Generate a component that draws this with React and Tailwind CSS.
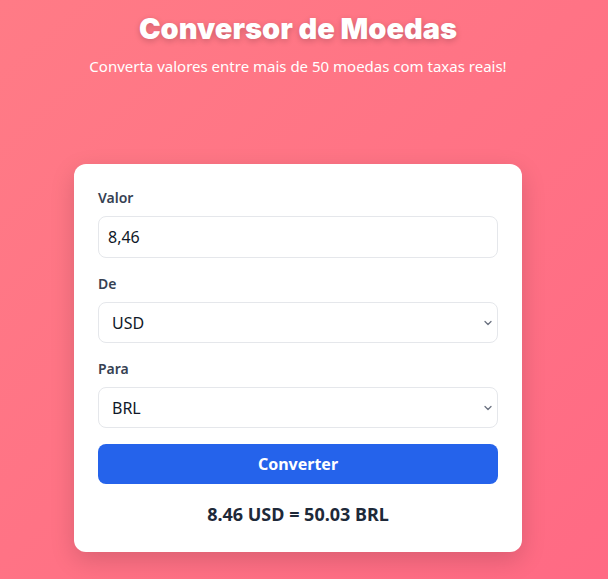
import React, { useState } from "react";

const rates = { USD: 1, BRL: 5.914, EUR: 0.92, GBP: 0.79, JPY: 149.5 };

function Chevron() {
  return (
    <svg className="pointer-events-none absolute right-[5px] top-1/2 -translate-y-1/2" width="10" height="10" viewBox="0 0 10 10" fill="none">
      <path d="M2 3.5 L5 6.5 L8 3.5" stroke="#6b7280" strokeWidth="1.3" strokeLinecap="round" strokeLinejoin="round" />
    </svg>
  );
}

function CurrencySelect({ value, onChange }) {
  return (
    <div className="relative">
      <select
        value={value}
        onChange={(e) => onChange(e.target.value)}
        className="w-full appearance-none rounded-lg border border-gray-200 bg-white px-[13px] h-[41px] text-base text-gray-900 outline-none"
      >
        {Object.keys(rates).map((c) => (
          <option key={c} value={c}>
            {c}
          </option>
        ))}
      </select>
      <Chevron />
    </div>
  );
}

export default function App() {
  const [amount, setAmount] = useState("8,46");
  const [from, setFrom] = useState("USD");
  const [to, setTo] = useState("BRL");

  return (
    <div
      className="min-h-[579px] w-full pr-3 bg-gradient-to-br from-[#ff7b86] to-[#ff6a84] flex flex-col items-center"
      style={{ fontFamily: '"Noto Sans", "Open Sans", sans-serif' }}
    >
      {/* cabeçalho */}
      <h1
        className="mt-[12px] text-[29px] leading-[34px] font-black text-white [text-shadow:0_2px_6px_rgba(0,0,0,0.2)]"
        style={{ fontFamily: 'Inter, "DejaVu Sans", sans-serif' }}
      >
        Conversor de Moedas
      </h1>
      <p className="mt-[8px] text-[15px] leading-6 text-white">Converta valores entre mais de 50 moedas com taxas reais!</p>

      {/* card */}
      <div className="mt-[86px] w-[448px] rounded-xl bg-white p-6 shadow-[0_8px_24px_rgba(0,0,0,0.15)]">
        <label className="block mb-2 text-sm leading-5 font-semibold text-gray-700">Valor</label>
        <input
          value={amount}
          onChange={(e) => setAmount(e.target.value)}
          className="mb-4 w-full rounded-lg border border-gray-200 h-[42px] px-[9px] text-base text-gray-900 outline-none"
        />

        <label className="block mb-2 text-sm leading-5 font-semibold text-gray-700">De</label>
        <div className="mb-4">
          <CurrencySelect value={from} onChange={setFrom} />
        </div>

        <label className="block mb-2 text-sm leading-5 font-semibold text-gray-700">Para</label>
        <CurrencySelect value={to} onChange={setTo} />

        <button className="mt-4 w-full h-10 rounded-lg bg-[#2563eb] text-base font-bold text-white">Converter</button>

        <p className="mt-4 text-center text-lg leading-7 font-bold text-gray-800">8.46 USD = 50.03 BRL</p>
      </div>
    </div>
  );
}
